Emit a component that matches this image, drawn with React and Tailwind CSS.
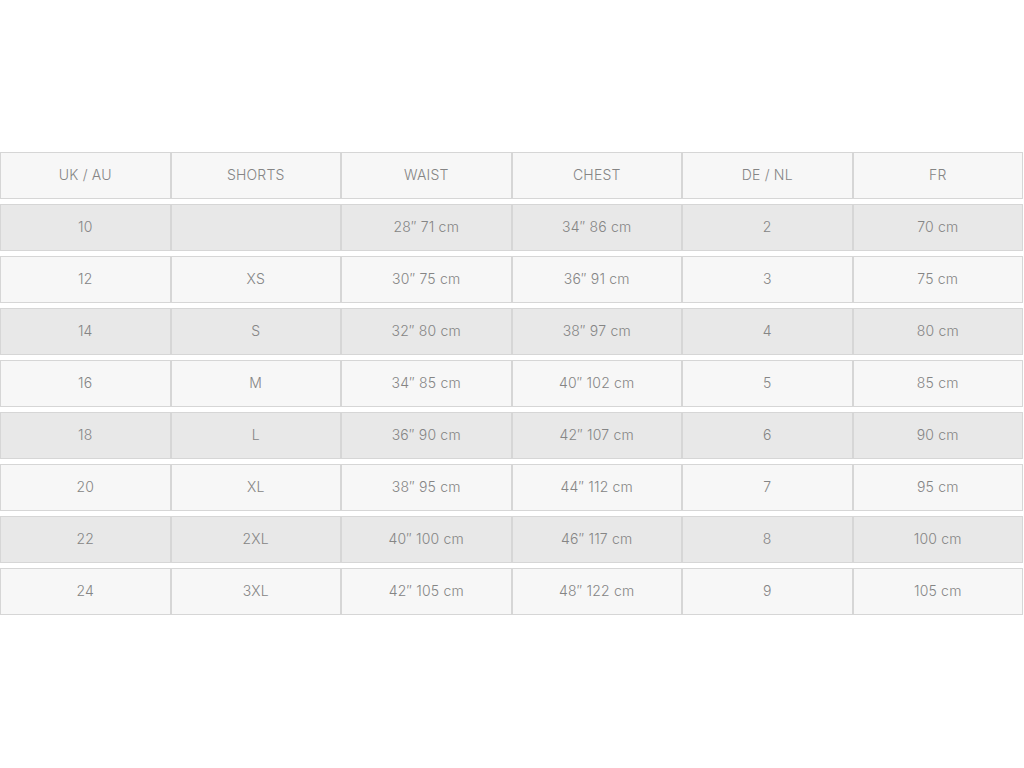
import React from "react";

const header = ["UK / AU", "SHORTS", "WAIST", "CHEST", "DE / NL", "FR"];
const rows = [
  ["10", "", "28\u2033 71 cm", "34\u2033 86 cm", "2", "70 cm"],
  ["12", "XS", "30\u2033 75 cm", "36\u2033 91 cm", "3", "75 cm"],
  ["14", "S", "32\u2033 80 cm", "38\u2033 97 cm", "4", "80 cm"],
  ["16", "M", "34\u2033 85 cm", "40\u2033 102 cm", "5", "85 cm"],
  ["18", "L", "36\u2033 90 cm", "42\u2033 107 cm", "6", "90 cm"],
  ["20", "XL", "38\u2033 95 cm", "44\u2033 112 cm", "7", "95 cm"],
  ["22", "2XL", "40\u2033 100 cm", "46\u2033 117 cm", "8", "100 cm"],
  ["24", "3XL", "42\u2033 105 cm", "48\u2033 122 cm", "9", "105 cm"],
];

function Row({ cells, shaded }) {
  return (
    <div className="grid grid-cols-6">
      {cells.map((c, i) => (
        <div
          key={i}
          className={`h-[47px] pb-[2px] flex items-center justify-center border border-[#d6d6d6] ${shaded ? "bg-[#e8e8e8]" : "bg-[#f7f7f7]"}`}
        >
          {c}
        </div>
      ))}
    </div>
  );
}

export default function App() {
  return (
    <div className="w-[1024px] h-[768px] bg-white pt-[152px] font-['Inter','Liberation_Sans',sans-serif] text-[14px] font-light tracking-[0.2px] text-[#858585]">
      <div className="w-[1023px] flex flex-col gap-[5px]">
        <Row cells={header} shaded={false} />
        {rows.map((r, i) => (
          <Row key={i} cells={r} shaded={i % 2 === 0} />
        ))}
      </div>
    </div>
  );
}
